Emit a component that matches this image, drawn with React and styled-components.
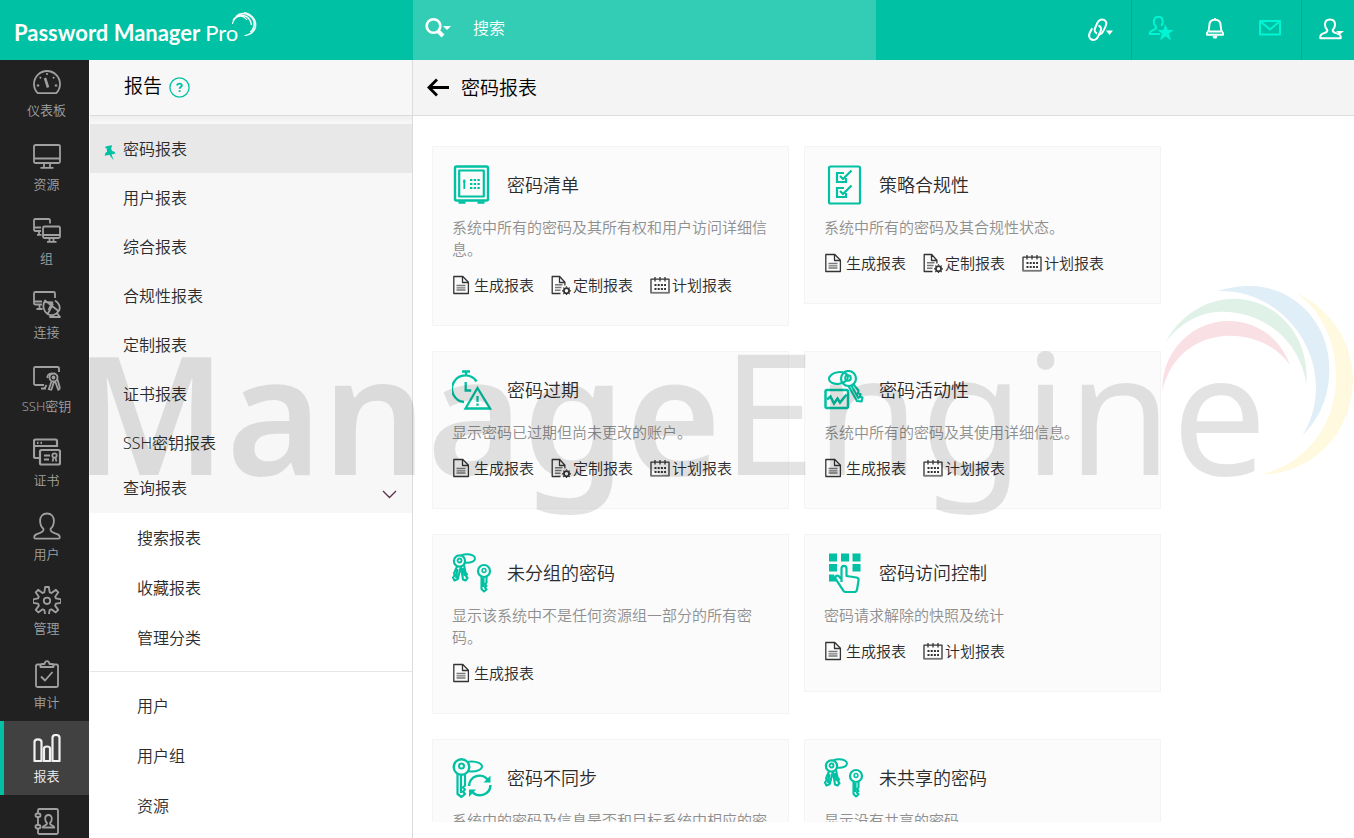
import React from 'react'
import styled, { createGlobalStyle } from 'styled-components';

const COLOR = {
    main: '#00c1a3',
    bright: '#00f5d4',
    rail: '#212121',
    railActive: '#414141',
    railIcon: '#a0a0a0',
    panel: '#f7f7f7',
    line: '#dcdcdc',
    text: '#2b2b2b',
    gray: '#8f8f8f',
}

const GlobalStyle = createGlobalStyle`
    *{
        box-sizing: border-box;
    }
    body{
        margin: 0;
        overflow: hidden;
        background-color: #fff;
        color: ${COLOR.text};
        font-family: "Noto Sans", "Noto Sans CJK SC", sans-serif;
        font-weight: 350;
    }
    h1, h2, h3, p, ul{
        margin: 0;
        padding: 0;
        font-weight: inherit;
    }
    ul{
        list-style: none;
    }
    a{
        color: inherit;
        text-decoration: none;
    }
    button{
        padding: 0;
        border: 0;
        background: none;
        color: inherit;
        font: inherit;
        cursor: pointer;
    }
    svg{
        display: block;
        flex: none;
    }
`
const Page = styled.div`
    position: relative;
    height: 100vh;
    display: flex;
    flex-direction: column;
    overflow: hidden;
`
const TopBar = styled.header`
    flex: none;
    display: flex;
    height: 60px;
    background-color: ${COLOR.main};
    color: #fff;
`
const Brand = styled.a`
    flex: 0 0 413px;
    display: flex;
    align-items: center;
    padding: 6px 0 0 14px;
    font-family: Lato, sans-serif;
    font-size: 22px;
    font-weight: 700;
    line-height: 28px;
    white-space: pre;
    span{
        font-weight: 400;
    }
    svg{
        margin: -16px 0 0 -7px;
    }
`
const Search = styled.form`
    flex: 0 1 463px;
    display: flex;
    align-items: center;
    gap: 20px;
    padding: 0 12px 4px;
    background-color: #33cdb5;
    input{
        flex: 1;
        min-width: 0;
        padding: 0;
        border: 0;
        outline: 0;
        background: none;
        color: #fff;
        font: inherit;
        font-size: 16px;
        line-height: 24px;
    }
    input::placeholder{
        color: #fff;
        opacity: 1;
    }
`
const Tools = styled.div`
    flex: 1;
    display: flex;
    justify-content: flex-end;
`
const ToolGroup = styled.div`
    display: flex;
    align-items: center;
    gap: 28px;
    padding: ${props => props.$pad};
    border-left: ${props => props.$divided ? '1px solid #00ab91' : '0'};
`
const Body = styled.div`
    flex: 1;
    min-height: 0;
    display: flex;
`
const Rail = styled.nav`
    flex: 0 0 89px;
    overflow: hidden;
    background-color: ${COLOR.rail};
    ul{
        margin-top: -5px;
    }
`
const RailLink = styled.a`
    display: flex;
    flex-direction: column;
    align-items: center;
    gap: 5px;
    height: 74px;
    padding-top: 13px;
    border-left: 4px solid ${props => props.$active ? COLOR.main : 'transparent'};
    background-color: ${props => props.$active ? COLOR.railActive : 'transparent'};
    color: ${props => props.$active ? '#f0f0f0' : COLOR.railIcon};
    font-size: 13px;
    line-height: 18px;
`
const Panel = styled.aside`
    flex: 0 0 324px;
    overflow: hidden;
    border-left: 1px solid #fff;
    border-right: 1px solid ${COLOR.line};
`
const PanelHead = styled.div`
    display: flex;
    align-items: center;
    gap: 7px;
    height: 56px;
    padding: 0 0 4px 34px;
    border-bottom: 1px solid ${COLOR.line};
    background-color: ${COLOR.panel};
    color: #000;
    h2{
        font-size: 19px;
        line-height: 28px;
    }
    button{
        padding-top: 4px;
    }
`
const MainMenu = styled.ul`
    padding-top: 8px;
    background: linear-gradient(#efefef, ${COLOR.panel} 7px);
`
const MenuLink = styled.a`
    display: flex;
    align-items: center;
    height: 49px;
    padding-left: 14px;
    background-color: ${props => props.$active ? '#e8e8e8' : 'transparent'};
    font-size: 16px;
    line-height: 24px;
    svg{
        margin: 8px 7px 0 0;
    }
`
const PinSpace = styled.span`
    width: 19px;
`
const MenuToggle = styled.button`
    display: flex;
    align-items: center;
    justify-content: space-between;
    width: 100%;
    height: 46px;
    padding: 0 15px 4px 33px;
    font-size: 16px;
    line-height: 24px;
    svg{
        margin-top: 12px;
    }
`
const SubMenu = styled.ul`
    padding: ${props => props.$lower ? '9px 0' : '0 0 8px'};
    border-top: ${props => props.$lower ? '1px solid #e6e6e6' : '0'};
    background-color: #fff;
    a{
        display: block;
        padding: 13px 0 13px 47px;
        font-size: 16px;
        line-height: 24px;
    }
`
const Main = styled.main`
    flex: 1;
    min-width: 0;
    display: flex;
    flex-direction: column;
`
const MainHead = styled.div`
    flex: none;
    display: flex;
    align-items: center;
    gap: 12px;
    height: 56px;
    padding-left: 14px;
    border-bottom: 1px solid ${COLOR.line};
    background-color: #f4f4f4;
    color: #000;
    h1{
        font-size: 19px;
        line-height: 28px;
    }
`
const Cards = styled.div`
    flex: 1;
    min-height: 0;
    overflow: hidden;
    display: grid;
    grid-template-columns: repeat(2, minmax(0, 357px));
    grid-auto-rows: max-content;
    align-items: start;
    gap: 25px 15px;
    margin-bottom: 16px;
    padding: 30px 19px 0;
`
const CardWrapper = styled.article`
    padding: 18px 19px 30px;
    border: 1px solid #f4f4f4;
    background-color: #fbfbfb;
`
const CardHead = styled.div`
    display: flex;
    align-items: center;
    gap: 15px;
    height: 40px;
    h3{
        font-size: 18px;
        line-height: 26px;
    }
`
const Summary = styled.p`
    padding: 11px 0 15px;
    color: ${COLOR.gray};
    font-size: 15px;
    line-height: 22px;
`
const Actions = styled.div`
    display: flex;
    gap: 17px;
`
const Action = styled.a`
    display: flex;
    align-items: center;
    gap: 2px;
    font-size: 15px;
    line-height: 20px;
    white-space: nowrap;
    svg{
        color: #333;
    }
`
/* brand mark laid over the whole page */
const Watermark = styled.div`
    position: absolute;
    top: 270px;
    right: 0;
    width: 1280px;
    pointer-events: none;
    svg{
        position: absolute;
        top: 0;
        right: 0;
    }
`
const WatermarkText = styled.div`
    padding-top: 56px;
    color: rgba(0, 0, 0, 0.11);
    font-family: "Noto Sans", sans-serif;
    font-size: 169px;
    line-height: 168px;
    font-weight: 400;
    white-space: nowrap;
    strong{
        font-size: 164px;
        font-weight: 600;
    }
`

function Line ({size = 28, width = 1.8, children}) {
    return(
        <svg width={size} height={size} viewBox={`0 0 ${size} ${size}`} fill="none" stroke="currentColor" strokeWidth={width} strokeLinejoin="round" aria-hidden="true">
            {children}
        </svg>
    )
}

const personPath = 'M14 1.500c-4.300 0-6.900 2.900-6.900 7.300 0 3.400 1.300 6.400 3.300 8 .5 2.400-.8 3.200-3.400 4.100C3.500 22 1.200 22.600 1.200 25.200c0 1 .5 1.500 1.500 1.500h22.600c1 0 1.500-.5 1.500-1.500 0-2.600-2.300-3.200-5.800-4.300-2.600-.9-3.900-1.700-3.400-4.100 2-1.600 3.300-4.600 3.300-8 0-4.400-2.600-7.300-6.900-7.300z'

const railIcon = {
    gauge: <>
        <path d="M4.800 25.200H23.200A13 13 0 1 0 4.800 25.200z" />
        <path d="M12 10l3 9.500" strokeWidth="2.600" />
        <path d="M13.200 6h1.600M6.800 9.200l1.200 1.200M21.200 9.200L20 10.400M3.800 17.500h2.400M21.800 17.500h2.400" strokeWidth="1.800" />
    </>,
    monitor: <>
        <rect x="1" y="3" width="26" height="18" rx="1.500" />
        <path d="M1 16.500h26M11 21v4M17 21v4M7.500 25.800h13" />
    </>,
    group: <>
        <path d="M8 15H2.500C1.500 15 1 14.500 1 13.500V4.300C1 3.400 1.500 3 2.500 3h13c1 0 1.500.4 1.500 1.300V7.500M1 11.500h7M6 15v3.200M4 18.800h4.500" />
        <rect x="10" y="10.500" width="17" height="11.500" rx="1.500" />
        <path d="M10 19h17M16.500 22v3M20.500 22v3M14 25.800h9.500" />
    </>,
    dish: <>
        <path d="M9 14.500H2.500C1.500 14.500 1 14 1 13V3.200C1 2.400 1.500 2 2.500 2h18c1 0 1.500.4 1.500 1.200V8M1 11.500h8M6.500 14.500v4M3.500 19h6" />
        <path d="M12 10.500c-3 5-1.500 11 2.500 13.500 4 2.300 9 1 11-3zM12 10.500L25.500 21M12 12l7.500.500L15.500 20M20 13.500l-5 10M22 10.500c4.500 2.500 5.500 7 4 10.500M19.500 25L17 27h10l-3.500-4.500" />
    </>,
    keys: <>
        <path d="M11 21H2.500C1.500 21 1 20.500 1 19.500V4.300C1 3.400 1.500 3 2.500 3h22c1 0 1.500.4 1.500 1.300V8M13.500 21l-2 3.500M8 24.500h5" />
        <circle cx="20.500" cy="13.500" r="4" />
        <circle cx="20.500" cy="13.500" r="1" />
        <path d="M18.500 17.500L15.500 26M21 17.500l-2.500 8M15 25l4 1M22 17l3.500 9.500M24.500 15.500l2.500 9M25 26l2-1.500M15 14c-1.500-2 .5-4.500 4-4.500" />
    </>,
    certificate: <>
        <path d="M6 20H2.500C1.500 20 1 19.500 1 18.500V3c0-1 .5-1.500 1.500-1.500h20c1 0 1.500.5 1.500 1.500v6M1 8h23M4 4.800h1.500M7.500 4.800H9" strokeWidth="2.200" />
        <rect x="7" y="12" width="20" height="14.500" rx="1.500" strokeWidth="2.200" />
        <path d="M11 17.500h6M11 21.500h5" />
        <circle cx="21.500" cy="17.500" r="2.200" />
        <path d="M20.500 20l-1 3.500M22.500 20l1 3.500" />
    </>,
    person: <path d={personPath} />,
    gear: <>
        <path d="M12.200 1h3.600l.9 5.300 1.800.700 4.400-3.200 2.400 2.500-3.100 4.400.7 1.700 5.100 1v3.400l-5.100.9-.8 1.900 3.100 4.300-2.500 2.500-4.300-3.100-1.800.8-.8 5h-3.600l-.8-5-1.800-.8-4.300 3.100-2.500-2.500 3.100-4.300-.8-1.900-5.100-.9v-3.400l5.100-1 .7-1.700-3.100-4.400 2.400-2.500 4.400 3.200 1.800-.7z" />
        <circle cx="14" cy="14.800" r="3.200" />
    </>,
    clipboard: <>
        <path d="M8.500 4.500h-4C3.500 4.500 3 5 3 6v19.500c0 1 .5 1.500 1.500 1.500h19c1 0 1.500-.5 1.500-1.500V6c0-1-.5-1.500-1.500-1.500h-4" />
        <path d="M7.500 7V5.500c0-1 .8-1.500 2-1.500h2c.3-1.800 1-2.800 2.500-2.800S16.200 2.200 16.500 4h2c1.200 0 2 .5 2 1.500V7zM8 16.500l4 4 7.500-8.500" />
    </>,
    chart: <>
        <path d="M1.500 27V8c0-1.800 1-2.600 3.500-2.600S8.500 6.200 8.500 8v19zM11 27V14.500c0-1.500.8-2 3-2s3 .5 3 2V27zM19.500 27V3.600c0-1.700 1-2.600 3.500-2.600s3.500.9 3.500 2.600V27z" strokeWidth="2.200" />
    </>,
    book: <>
        <path d="M5 5.500V2.300C5 1.400 5.500 1 6.500 1h17c1 0 1.500.5 1.500 1.500v22c0 1-.5 1.500-1.500 1.500h-17C5.500 26 5 25.500 5 24.700V21M5 10v6.500" />
        <rect x="2.500" y="5.500" width="5" height="3.500" rx="1.700" />
        <rect x="2.500" y="17" width="5" height="3.500" rx="1.700" />
        <path d="M15.500 7c-2.200 0-3.300 1.500-3.300 3.700 0 1.800.7 3.300 1.700 4 .3 1.500-.3 2-1.700 2.500-1.500.5-2.500.8-2.500 2.300h11.600c0-1.500-1-1.800-2.500-2.300-1.400-.5-2-1-1.700-2.500 1-.7 1.700-2.200 1.700-4C18.800 8.500 17.700 7 15.500 7z" />
    </>,
}

const keyPair = <>
    <ellipse cx="15" cy="5.500" rx="8" ry="4.300" strokeWidth="2" />
    <circle cx="7.500" cy="8" r="5.600" fill="#fbfbfb" strokeWidth="2.200" />
    <circle cx="7.500" cy="7.500" r="2" strokeWidth="1.800" />
    <path d="M5 13.500L3 18l-1 2.500 1 1-2 3 1.500 3 3.300-1.500L8.500 15M9 14l2 12.500 2.500 1 2-2.500-1.500-2 1-1.500-1.500-2L12 12M5.500 16L4 25M11 15l1.800 8" strokeWidth="2.100" />
    <circle cx="32" cy="18" r="6" strokeWidth="2.200" />
    <circle cx="32" cy="17.500" r="1.900" strokeWidth="1.500" />
    <path d="M29.500 23.500V36l2.500 2.500 2.500-2-1.500-2 1.500-1.500-1.500-2 1.500-1.500v-6M31.500 25v9" strokeWidth="2.100" />
</>

const cardIcon = {
    safe: <>
        <rect x="3" y="1.500" width="33" height="34" rx="1.500" strokeWidth="2.400" />
        <rect x="7.200" y="5.500" width="24.600" height="26" strokeWidth="2.200" />
        <path d="M6.500 37.500h7M25.500 37.500h7" strokeWidth="2.400" />
        <path d="M12.300 14.500v9.500M11 16.500h2.500" strokeWidth="1.800" />
        <path d="M18 15h10M18 19h10M18 23h10" strokeWidth="2.200" strokeDasharray="2.400 1.300" />
    </>,
    checklist: <>
        <rect x="5" y="1.500" width="31" height="37" rx="1.500" strokeWidth="2.200" />
        <path d="M20 8h-7v9h9v-4M16 11l3 3 8.500-8.500M20 23h-7v9h9v-4M16 26l3 3 8.500-8.500" strokeWidth="2.200" strokeLinejoin="miter" />
    </>,
    expiry: <>
        <path d="M10 1.500h8M14 2v3M12 32A13.300 13.300 0 1 1 24.500 11.500M13.700 12v8.500h5.500" strokeWidth="2.300" strokeLinejoin="miter" />
        <path d="M25.500 18L38 38.500H13.500z" strokeWidth="2.300" strokeLinejoin="miter" />
        <path d="M25.500 26v6M25.500 33.500v2.300" strokeWidth="2.300" />
    </>,
    activity: <>
        <ellipse cx="14.500" cy="8" rx="9.500" ry="5.800" strokeWidth="2" transform="rotate(-8 14.500 8)" />
        <circle cx="24.500" cy="8.500" r="7.500" strokeWidth="2.200" />
        <circle cx="24" cy="8" r="2.800" strokeWidth="2" />
        <path d="M24.500 16l8.500 15 4.500.5 1-4-2.500-.5.500-3-2.500-.5.500-3L29 14M27.500 16l7.500 13" strokeWidth="2.200" />
        <rect x="1.500" y="20" width="22.500" height="18" rx="1.500" strokeWidth="2.500" />
        <path d="M3 29.500l3.500-3 3.500 7 3.500-5 2.500 4 6.500-8" strokeWidth="2.500" strokeLinejoin="miter" />
    </>,
    keyPair,
    keypad: <>
        <path d="M5 .5h8v8H5zM17 .5h8v8h-8zM28.500 .5h8v8h-8zM5 11h8v7.500H5zM28.500 11h8v7.500h-8zM5 21.500h5l3 7H5z" fill="currentColor" stroke="none" />
        <path d="M17.500 29V15.500c0-3.600 5-3.600 5 0v7.500l10 1.500c1.800.4 2.400 1.400 2 3.200l-1.500 9c-.3 1.600-1 2.300-2.500 2.300H22c-1.500 0-2.300-.5-3-1.800l-7.200-11c-1.300-2.500 1-4.700 3-3l2.700 3" fill="#fbfbfb" strokeWidth="2.200" />
    </>,
    sync: <>
        <ellipse cx="19.500" cy="8.500" rx="10.500" ry="5" strokeWidth="2" />
        <circle cx="9.500" cy="9" r="7.800" fill="#fbfbfb" strokeWidth="2.400" />
        <circle cx="9.500" cy="8" r="2.500" strokeWidth="2" />
        <path d="M5.500 16v20l4 3 3.500-3-2-2.500 2-2-2-2 2-2V16.500M9 17v18" strokeWidth="2.200" />
        <path d="M17 28a10.500 10.500 0 0 1 19-6M38.500 27a10.500 10.500 0 0 1-18.500 6.500" strokeWidth="2.500" />
        <path d="M38.500 17.500v7h-7zM17 39v-7.500h7z" fill="currentColor" stroke="none" />
    </>,
}

const actionIcon = {
    generate: <>
        <path d="M1.800 1.500h9l5.600 5.700v11.300H1.800z" />
        <path d="M10.500 1.500v6h6" />
        <path d="M4.500 10.500h9M4.500 12.800h9M4.500 15h9" stroke="#777" strokeWidth="1.300" />
    </>,
    custom: <>
        <path d="M9.500 18.500H1.200v-17h7.500l5.200 5.700v3.300M8.500 1.500v6H14" />
        <path d="M4 9.800h7.500M4 12.500h6.500M4 15.200h5.500" stroke="#777" strokeWidth="1.400" />
        <circle cx="15.500" cy="15.800" r="2.600" strokeWidth="1.800" />
        <path d="M15.500 12.200v-1M15.500 20v-1M12 15.800h-1M20 15.800h-1M13 13.300l-.7-.7M18 18.300l.7.7M13 18.300l-.7.700M18 13.300l.7-.7" strokeWidth="1.200" />
    </>,
    schedule: <>
        <path d="M1 18V4.200h18V18M5 2v4.500M10 2v4.500M15 2v4.500" />
        <path d="M.5 17.800h19" stroke="#777" strokeWidth="1.800" />
        <path d="M4.500 10h11.500M4.500 14h11.500" strokeWidth="2" strokeDasharray="2 1.200" />
    </>,
}

const actionLabel = {
    generate: '生成报表',
    custom: '定制报表',
    schedule: '计划报表',
}

const railItems = [
    { icon: 'gauge', label: '仪表板' },
    { icon: 'monitor', label: '资源' },
    { icon: 'group', label: '组' },
    { icon: 'dish', label: '连接' },
    { icon: 'keys', label: 'SSH密钥' },
    { icon: 'certificate', label: '证书' },
    { icon: 'person', label: '用户' },
    { icon: 'gear', label: '管理' },
    { icon: 'clipboard', label: '审计' },
    { icon: 'chart', label: '报表', active: true },
    { icon: 'book' },
]

const menuItems = ['密码报表', '用户报表', '综合报表', '合规性报表', '定制报表', '证书报表', 'SSH密钥报表']
const queryItems = ['搜索报表', '收藏报表', '管理分类']
const lowerItems = ['用户', '用户组', '资源']

const reports = [
    { icon: 'safe', title: '密码清单', summary: '系统中所有的密码及其所有权和用户访问详细信息。', actions: ['generate', 'custom', 'schedule'] },
    { icon: 'checklist', title: '策略合规性', summary: '系统中所有的密码及其合规性状态。', actions: ['generate', 'custom', 'schedule'] },
    { icon: 'expiry', title: '密码过期', summary: '显示密码已过期但尚未更改的账户。', actions: ['generate', 'custom', 'schedule'] },
    { icon: 'activity', title: '密码活动性', summary: '系统中所有的密码及其使用详细信息。', actions: ['generate', 'schedule'] },
    { icon: 'keyPair', title: '未分组的密码', summary: '显示该系统中不是任何资源组一部分的所有密码。', actions: ['generate'] },
    { icon: 'keypad', title: '密码访问控制', summary: '密码请求解除的快照及统计', actions: ['generate', 'schedule'] },
    { icon: 'sync', title: '密码不同步', summary: '系统中的密码及信息是否和目标系统中相应的密', actions: [] },
    { icon: 'keyPair', title: '未共享的密码', summary: '显示没有共享的密码', actions: [] },
]

function Header () {
    return(
        <TopBar>
            <Brand href="#home">
                Password Manager <span>Pro</span>
                <svg width="28" height="28" viewBox="0 0 28 28" fill="none" stroke="#fff" aria-hidden="true">
                    <path d="M1.500 13C3 5 11 2 16 9" strokeWidth="1.200" />
                    <path d="M2 9.500C7 1 19 3 20.500 14" strokeWidth="1.500" />
                    <path d="M5 5.500C12-1 25 5 23 15c-.5 2.500-1.500 4.500-3.500 6" strokeWidth="1.500" />
                    <path d="M13 1.500C22 2 27.500 11 24 18.500c-2 4-6 6-10.500 6 5-1 9-4 10.500-8.500C26 9.500 20 3 13 1.500z" fill="#fff" strokeWidth=".6" />
                </svg>
            </Brand>
            <Search role="search">
                <button type="button" aria-label="搜索范围">
                    <svg width="28" height="22" viewBox="0 0 28 22" fill="none" stroke="#fff" aria-hidden="true">
                        <circle cx="8.500" cy="9" r="6.800" strokeWidth="2.600" />
                        <path d="M13 14l5 5" strokeWidth="4" />
                        <path d="M18 9h8l-4 4z" fill="#fff" stroke="none" />
                    </svg>
                </button>
                <input type="search" placeholder="搜索" aria-label="搜索" />
            </Search>
            <Tools>
                <ToolGroup $pad="0 18px">
                    <button type="button" aria-label="链接">
                        <svg width="26" height="26" viewBox="0 0 26 26" fill="none" stroke="#fff" strokeWidth="2" aria-hidden="true">
                            <path d="M10 16.500c-2.500-1-3-3.500-1.800-5.800l2.300-5c1.300-2.800 4-4 6.500-2.800 2.500 1.300 2.800 4 1.500 6.700l-2.500 5c-.7 1.500-1.800 2.500-3.300 2.800" />
                            <path d="M11.500 8.500c2.500 1 3.300 3.500 2 6l-2.500 5.300c-1.300 2.800-4 4-6.500 2.700-2.500-1.200-3-4-1.700-6.700l2.400-4.600" />
                            <path d="M19 13.500h7l-3.500 4.500z" fill="#fff" stroke="none" />
                        </svg>
                    </button>
                </ToolGroup>
                <ToolGroup $pad="0 19px 4px 16px" $divided>
                    <button type="button" aria-label="收藏用户">
                        <svg width="26" height="26" viewBox="0 0 26 26" fill="none" stroke={COLOR.bright} strokeWidth="2" aria-hidden="true">
                            <path d="M12 19H1.800c0-3 1.500-3.300 4.200-4.300 2-.8 2.500-1.500 2-3-1.500-1.200-2.200-3-2.200-5C5.800 3.700 7.500 1.700 10.300 1.700s4.500 2 4.500 5c0 1.500-.5 3-1.500 4" />
                            <path d="M17.500 9.500l2.200 5.500h6L21 18.500l2 7-5.500-4.300L12 25.500l2-7L9.300 15h6z" fill={COLOR.bright} stroke="none" />
                        </svg>
                    </button>
                    <button type="button" aria-label="通知">
                        <svg width="26" height="26" viewBox="0 0 26 26" fill="none" stroke="#fff" strokeWidth="2" strokeLinejoin="round" aria-hidden="true">
                            <path d="M13 4.800c-4 0-5.700 2.700-5.700 6.200 0 4-.8 5.500-2.300 7.200v1.500h16v-1.500c-1.500-1.700-2.300-3.200-2.300-7.200 0-3.500-1.700-6.200-5.700-6.200z" />
                            <path d="M13 3v2M7 16.500h12" />
                            <path d="M10.500 21h5l-1 2.500h-3z" fill="#fff" stroke="none" />
                        </svg>
                    </button>
                    <button type="button" aria-label="邮件">
                        <svg width="26" height="26" viewBox="0 0 26 26" fill="none" stroke={COLOR.bright} strokeWidth="2" strokeLinejoin="round" aria-hidden="true">
                            <rect x="4" y="6" width="20" height="13.500" />
                            <path d="M4.500 6.500l9.500 8 9.500-8" />
                        </svg>
                    </button>
                </ToolGroup>
                <ToolGroup $pad="0 10px 0 16px" $divided>
                    <button type="button" aria-label="账户">
                        <svg width="26" height="26" viewBox="0 0 26 26" fill="none" stroke="#fff" strokeWidth="2" strokeLinejoin="round" aria-hidden="true">
                            <path d="M12 2.500c-3.200 0-5 2-5 5 0 2.300.8 4.200 2.200 5.300.5 1.700-.3 2.300-2.200 3-3 1-4.700 1.500-4.700 4v1.500h20.400v-1.500c0-2.500-2.700-3-5.700-4-1.900-.7-2.700-1.300-2.200-3 1.400-1.100 2.200-3 2.200-5.300 0-3-1.800-5-5-5z" />
                            <path d="M18 14h8l-4 3.500z" fill="#fff" stroke="none" />
                        </svg>
                    </button>
                </ToolGroup>
            </Tools>
        </TopBar>
    )
}

function Card ({data}) {
    return(
        <CardWrapper>
            <CardHead>
                <svg width="40" height="40" viewBox="0 0 40 40" fill="none" stroke="currentColor" color={COLOR.main} strokeLinejoin="round" aria-hidden="true">
                    {cardIcon[data.icon]}
                </svg>
                <h3>{data.title}</h3>
            </CardHead>
            <Summary>{data.summary}</Summary>
            <Actions>
                {data.actions.map(name => (
                    <Action key={name} href={`#${name}`}>
                        <Line size={20} width={1.3}>{actionIcon[name]}</Line>
                        {actionLabel[name]}
                    </Action>
                ))}
            </Actions>
        </CardWrapper>
    )
}

function App () {
    return(
        <Page>
            <GlobalStyle />
            <Header />
            <Body>
                <Rail>
                    <ul>
                        {railItems.map(item => (
                            <li key={item.icon}>
                                <RailLink href={`#${item.icon}`} $active={item.active} aria-label={item.label || item.icon}>
                                    <Line>{railIcon[item.icon]}</Line>
                                    {item.label}
                                </RailLink>
                            </li>
                        ))}
                    </ul>
                </Rail>
                <Panel>
                    <PanelHead>
                        <h2>报告</h2>
                        <button type="button" aria-label="帮助">
                            <svg width="21" height="21" viewBox="0 0 21 21" fill="none" stroke={COLOR.main} aria-hidden="true">
                                <circle cx="10.500" cy="10.500" r="9.600" strokeWidth="1.300" />
                                <path d="M8.200 8.500c0-2.500 4.600-2.500 4.600 0 0 1.500-2.200 1.500-2.200 3.200M10.600 13.200v1.800" strokeWidth="1.900" />
                            </svg>
                        </button>
                    </PanelHead>
                    <MainMenu>
                        {menuItems.map((label, index) => (
                            <li key={label}>
                                <MenuLink href="#report" $active={index === 0}>
                                    {index === 0
                                        ? <svg width="12" height="16" viewBox="0 0 12 16" fill={COLOR.main} aria-hidden="true">
                                            <path d="M1.500 1.500L7.500.3l.6 1.500-1 1 .8 3.200c2 .2 3 1 3.600 2.400L7.500 9.500l2.300 6-4.500-5.700-4.500 1C.7 9 1.500 7.500 3 6.800L2.800 3.600 1.300 3z" />
                                        </svg>
                                        : <PinSpace />}
                                    {label}
                                </MenuLink>
                            </li>
                        ))}
                        <li>
                            <MenuToggle type="button" aria-expanded="true">
                                查询报表
                                <svg width="15" height="9" viewBox="0 0 15 9" fill="none" stroke="#5c2f48" strokeWidth="1.300" aria-hidden="true">
                                    <path d="M1 1l6.500 6.500L14 1" />
                                </svg>
                            </MenuToggle>
                        </li>
                    </MainMenu>
                    <SubMenu>
                        {queryItems.map(label => <li key={label}><a href="#query">{label}</a></li>)}
                    </SubMenu>
                    <SubMenu $lower>
                        {lowerItems.map(label => <li key={label}><a href="#lower">{label}</a></li>)}
                    </SubMenu>
                </Panel>
                <Main>
                    <MainHead>
                        <button type="button" aria-label="返回">
                            <svg width="22" height="20" viewBox="0 0 22 20" fill="none" stroke="#000" strokeWidth="2.800" aria-hidden="true">
                                <path d="M2 9.500h20M10 1.500l-8 8 8 8" />
                            </svg>
                        </button>
                        <h1>密码报表</h1>
                    </MainHead>
                    <Cards>
                        {reports.map(report => <Card key={report.title} data={report} />)}
                    </Cards>
                </Main>
            </Body>
            <Watermark aria-hidden="true">
                <WatermarkText><strong>Manage</strong>Engine</WatermarkText>
                <svg width="224" height="250" viewBox="0 0 672 750">
                    <path fill="#f8e0e4" d="M97 362C95 240 190 153 295 153c85 0 155 50 185 132-40-58-110-88-180-88C200 197 120 260 97 362z" />
                    <path fill="#e0f2e8" d="M106 217C150 135 230 86 312 86c128 2 228 110 217 257C510 210 400 125 275 125c-65 0-125 35-169 92z" />
                    <path fill="#e0eef7" d="M260 63c40-11 75-16 105-15 135 4 233 117 233 247 0 85-28 150-82 203 29-43 42-98 42-148C556 190 420 55 260 63z" />
                    <path fill="#fff9df" d="M498 69c102 46 172 146 171 266-4 155-124 280-281 278C520 590 617 470 618 325c0-105-38-200-120-256z" />
                </svg>
            </Watermark>
        </Page>
    )
}

export default App
